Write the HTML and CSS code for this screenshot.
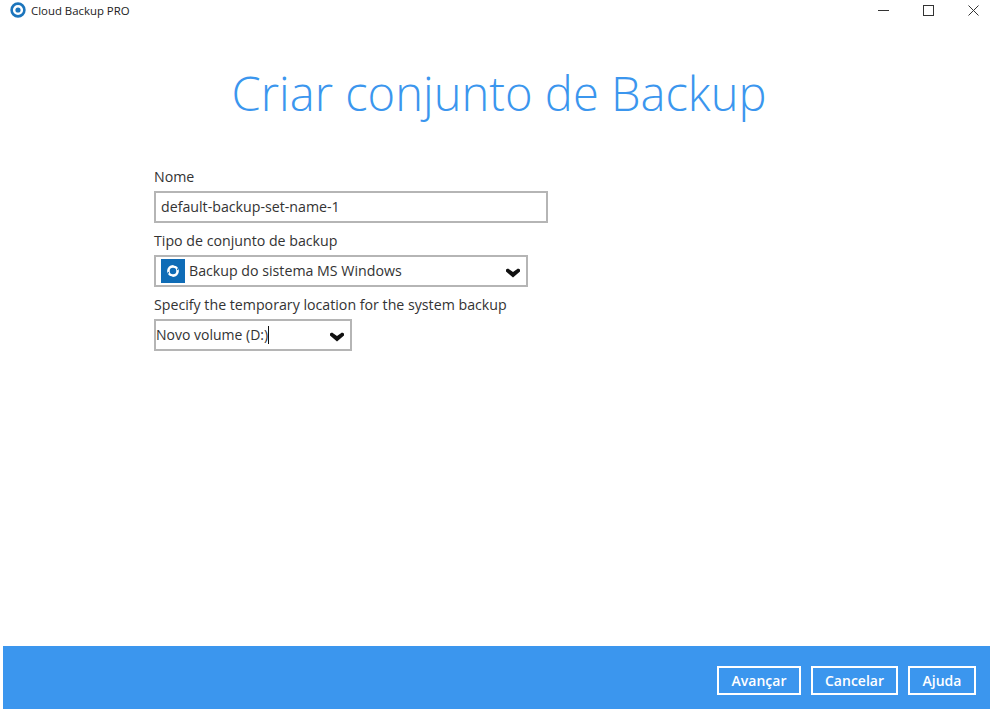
FILE: index.html
```html
<!DOCTYPE html>
<html lang="pt">
<head>
<meta charset="utf-8">
<title>Cloud Backup PRO</title>
<link rel="stylesheet" href="styles.css">
</head>
<body>
<div class="window">
  <header class="titlebar">
    <div class="brand">
      <svg class="brand-icon" width="16" height="16" viewBox="0 0 16 16"><circle cx="8" cy="8" r="6.4" fill="none" stroke="#1c75bc" stroke-width="2.6"/><circle cx="8" cy="8" r="2.6" fill="#1c75bc"/></svg>
      <span class="brand-name">Cloud Backup PRO</span>
    </div>
    <div class="controls">
      <svg class="ctl" width="11" height="11" viewBox="0 0 11 11"><path d="M0 5.5H11" stroke="#333" stroke-width="1"/></svg>
      <svg class="ctl" width="11" height="11" viewBox="0 0 11 11"><rect x=".5" y=".5" width="10" height="10" fill="none" stroke="#333" stroke-width="1"/></svg>
      <svg class="ctl" width="11" height="11" viewBox="0 0 11 11"><path d="M.5 .5L10.5 10.5M10.5 .5L.5 10.5" stroke="#333" stroke-width="1"/></svg>
    </div>
  </header>
  <main class="content">
    <h1 class="heading">Criar conjunto de Backup</h1>
    <form class="form">
      <label class="label">Nome</label>
      <div class="field field-name"><span class="value">default-backup-set-name-1</span></div>
      <label class="label">Tipo de conjunto de backup</label>
      <div class="field field-type">
        <span class="type-icon"><svg width="16" height="16" viewBox="0 0 16 16"><circle cx="8" cy="8" r="4.6" fill="none" stroke="#fff" stroke-width="2.6"/><path d="M8.5 1.8L14 3.4L12.4 7" fill="none" stroke="#0f6cb6" stroke-width="1.1"/><path d="M7.5 14.2L2 12.6L3.6 9" fill="none" stroke="#0f6cb6" stroke-width="1.1"/></svg></span>
        <span class="value">Backup do sistema MS Windows</span>
        <svg class="chev" width="14" height="10" viewBox="0 0 14 10"><path d="M0 1.5L2 0.5L7 4L12 0.5L14 1.5V3.5L7 9.5L0 3.5Z" fill="#111"/></svg>
      </div>
      <label class="label">Specify the temporary location for the system backup</label>
      <div class="field field-loc">
        <span class="value value-loc">Novo volume (D:)</span><span class="caret"></span>
        <svg class="chev" width="14" height="10" viewBox="0 0 14 10"><path d="M0 1.5L2 0.5L7 4L12 0.5L14 1.5V3.5L7 9.5L0 3.5Z" fill="#111"/></svg>
      </div>
    </form>
  </main>
  <footer class="footer">
    <button class="btn btn-next" type="button">Avançar</button>
    <button class="btn btn-cancel" type="button">Cancelar</button>
    <button class="btn btn-help" type="button">Ajuda</button>
  </footer>
</div>
</body>
</html>
```
FILE: styles.css
```css
* { box-sizing: border-box; }
html, body { margin: 0; height: 100%; background: #fff; overflow: hidden; }
body { font-family: "Open Sans", sans-serif; color: #333; }
.window { width: 990px; height: 709px; display: flex; flex-direction: column; }
.titlebar { height: 22px; flex: none; display: flex; justify-content: space-between; align-items: center; padding: 0 11px 2px 10px; }
.brand { display: flex; align-items: center; gap: 5px; }
.brand-icon { display: block; }
.brand-name { font-size: 11.4px; color: #222; }
.controls { display: flex; gap: 34px; }
.ctl { display: block; }
.content { flex: 1; padding-left: 154px; }
.heading { margin: 35px 0 0 -154px; text-align: center; font-weight: 300; font-size: 47.1px; line-height: 72px; color: #3b96ee; padding-left: 8px; }
.form { display: flex; flex-direction: column; margin-top: 38px; }
.label { font-size: 14.2px; line-height: 20px; height: 20px; margin-bottom: 4px; color: #333; }
.field { height: 32px; border: 2px solid #b5b5b5; display: flex; align-items: center; font-size: 14.2px; margin-bottom: 8px; color: #333; }
.field-name { width: 394px; padding-left: 5px; }
.field-type { width: 374px; padding-left: 5px; }
.field-loc { width: 198px; padding-left: 0; }
.value { margin-bottom: 2px; }
.value-loc { font-size: 14px; }
.type-icon { width: 24px; height: 24px; background: #0f6cb6; display: flex; align-items: center; justify-content: center; margin-right: 4px; flex: none; }
.type-icon svg { display: block; }
.chev { margin-left: auto; margin-right: 6px; margin-top: 3px; flex: none; }
.caret { width: 1px; height: 18px; background: #111; flex: none; }
.footer { height: 63px; flex: none; margin-left: 3px; background: #3b96ee; display: flex; justify-content: flex-end; align-items: flex-start; gap: 10px; padding: 20px 14px 0 0; }
.btn { height: 29px; border: 2px solid #fff; background: transparent; color: #fff; font-family: "Open Sans", sans-serif; font-size: 14px; font-weight: 600; padding: 0; }
.btn-next { width: 84px; }
.btn-cancel { width: 87px; }
.btn-help { width: 68px; }
```
